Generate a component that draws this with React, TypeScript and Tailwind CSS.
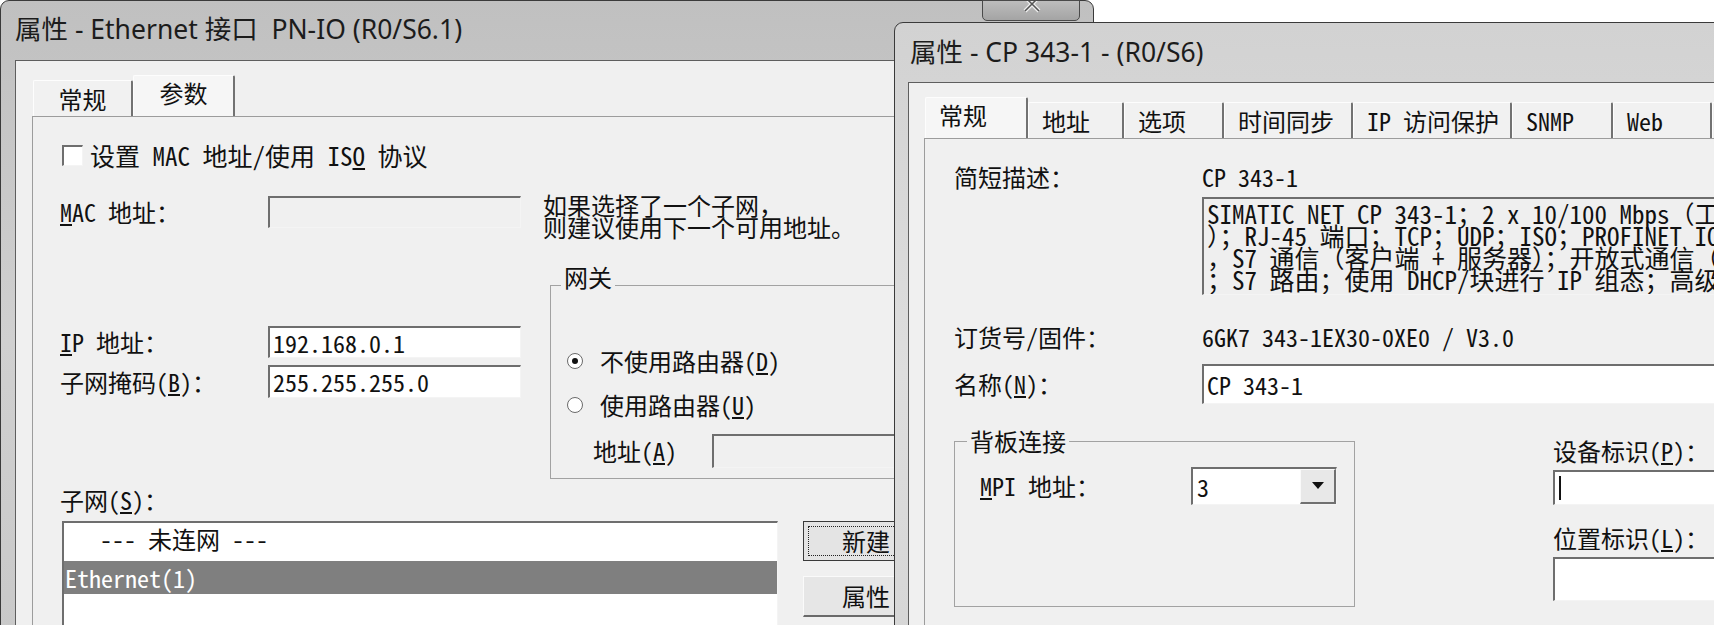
import React from 'react';

const mono = "font-['Noto_Sans_Mono_CJK_SC','Liberation_Mono','Noto_Sans_CJK_SC',monospace]";
const ui = "font-['Noto_Sans','Noto_Sans_CJK_SC',sans-serif]";
const sunken = 'border-t-2 border-l-2 border-b border-r border-t-[#6e6e6e] border-l-[#6e6e6e] border-b-[#f4f4f4] border-r-[#f4f4f4]';

function Tab({ label, width, active, center }: { label: string; width: string; active?: boolean; center?: boolean }) {
  return (
    <div
      className={`${width} ${active ? 'h-[41px] bg-[#f6f6f6] pb-[6px]' : 'h-[36px] bg-[#f1f1f1]'} ${center ? 'justify-center' : 'pl-[13px]'} flex items-center border-t border-l border-t-[#fdfdfd] border-l-[#fdfdfd] border-r-2 border-r-[#727272] rounded-t-[2px] whitespace-nowrap`}
    >
      {label}
    </div>
  );
}

function Radio({ checked, children }: { checked?: boolean; children: React.ReactNode }) {
  return (
    <div className="flex items-center h-[24px]">
      <div className="w-[16px] h-[16px] rounded-full border border-[#6a6a6a] bg-white flex items-center justify-center">
        {checked && <div className="w-[6px] h-[6px] rounded-full bg-[#111]" />}
      </div>
      <span className="ml-[17px]">{children}</span>
    </div>
  );
}

function EthernetDialog() {
  return (
    <div className="absolute left-0 top-0 w-[1094px] h-[680px] rounded-t-[9px] border border-[#3a3a3a] bg-gradient-to-b from-[#c0c0c0] via-[#d0d0d0] to-[#c8c8c8]">
      <div className={`${ui} h-[59px] flex items-center pl-[14px] pb-[2px] text-[26.5px] text-[#1c1c1c] whitespace-nowrap`}>
        属性 - Ethernet 接口&nbsp; PN-IO (R0/S6.1)
      </div>
      <div className="absolute right-[13px] top-[-1px] w-[98px] h-[21px] overflow-hidden rounded-b-[5px] border border-[#4a4a4a] bg-gradient-to-b from-[#bdbdbd] to-[#a4a4a4]">
        <svg className="absolute left-[38px] top-[-8px]" width="22" height="22" viewBox="0 0 22 22">
          <path d="M4 4 L18 18 M18 4 L4 18" stroke="#eeeeee" strokeWidth="4" />
          <path d="M4 4 L18 18 M18 4 L4 18" stroke="#555" strokeWidth="1.5" />
        </svg>
      </div>
      <div className={`${mono} ml-[14px] h-full border-l border-t border-[#5e5e5e] bg-[#f0f0f0] pt-[14px] pl-[16px] text-[24px] text-[#111]`}>
        <div className="flex items-end ml-[1px] leading-none">
          <Tab label="常规" width="w-[100px]" center />
          <Tab label="参数" width="w-[102px]" active center />
        </div>
        <div className="border-t border-l border-[#9c9c9c] h-full pl-[27px] pt-[27px] leading-none">
          <div className="flex items-center h-[22px] ml-[2px]">
            <div className={`w-[21px] h-[21px] bg-white ${sunken}`} />
            <span className="ml-[7px] whitespace-nowrap text-[25px]">
              设置 MAC 地址/使用 IS<u>O</u> 协议
            </span>
          </div>
          <div className="flex mt-[30px]">
            <div className="w-[208px] h-[32px] flex items-center"><span><u>M</u>AC 地址：</span></div>
            <div className={`w-[253px] h-[32px] bg-[#f0f0f0] ${sunken}`} />
            <div className="ml-[22px] -mt-[2px] leading-[22px] whitespace-nowrap">
              <div>如果选择了一个子网，</div>
              <div>则建议使用下一个可用地址。</div>
            </div>
          </div>
          <div className="flex mt-[27px]">
            <div className="w-[490px] shrink-0 pt-[61px]">
              <div className="flex h-[32px]">
                <div className="w-[208px] flex items-center"><span><u>I</u>P 地址：</span></div>
                <div className={`w-[253px] bg-white flex items-center pl-[3px] ${sunken}`}>192.168.0.1</div>
              </div>
              <div className="flex h-[33px] mt-[7px]">
                <div className="w-[208px] flex items-center"><span>子网掩码(<u>B</u>)：</span></div>
                <div className={`w-[253px] bg-white flex items-center pl-[3px] ${sunken}`}>255.255.255.0</div>
              </div>
            </div>
            <fieldset className="w-[420px] shrink-0 border border-[#a2a2a2] pb-[10px]">
              <legend className="ml-[10px] px-[3px] leading-[24px] pb-[16px]">网关</legend>
              <div className="pl-[16px] mt-[44px]">
                <Radio checked>不使用路由器(<u>D</u>)</Radio>
                <div className="mt-[20px]">
                  <Radio>使用路由器(<u>U</u>)</Radio>
                </div>
              </div>
              <div className="flex items-center mt-[17px] pl-[42px] h-[34px]">
                <div className="w-[119px] whitespace-nowrap">地址(<u>A</u>)</div>
                <div className={`w-[300px] h-[34px] bg-[#f0f0f0] ${sunken}`} />
              </div>
            </fieldset>
          </div>
          <div className="mt-[9px] leading-[24px]">子网(<u>S</u>)：</div>
          <div className="flex mt-[9px] ml-[2px]">
            <div className={`w-[716px] shrink-0 h-[140px] bg-white ${sunken}`}>
              <div className="h-[38px] flex items-center pb-[6px] pl-[36px] whitespace-nowrap">--- 未连网 ---</div>
              <div className="h-[33px] flex items-center bg-[#7f7f7f] text-white pl-[1px]">Ethernet(1)</div>
            </div>
            <div className="ml-[25px] shrink-0">
              <div className="w-[110px] h-[40px] border border-[#3a3a3a] bg-[#e4e4e4] p-[4px]">
                <div className="h-full border border-dotted border-[#222] flex items-center pl-[33px]">新建</div>
              </div>
              <div className="w-[110px] h-[41px] mt-[15px] bg-[#e6e6e6] border-t border-l border-[#fafafa] border-b-2 border-r-2 border-b-[#6a6a6a] border-r-[#6a6a6a] flex items-center pl-[38px]">
                属性
              </div>
            </div>
          </div>
        </div>
      </div>
    </div>
  );
}

function CpDialog() {
  return (
    <div className="absolute left-[894px] top-[22px] w-[900px] h-[700px] rounded-tl-[9px] border border-[#3a3a3a] bg-gradient-to-b from-[#d2d2d2] via-[#dedede] to-[#d4d4d4]">
      <div className={`${ui} h-[59px] flex items-center pl-[15px] text-[26.5px] text-[#1c1c1c] whitespace-nowrap`}>
        属性 - CP 343-1 - (R0/S6)
      </div>
      <div className={`${mono} ml-[13px] h-full border-l border-t border-[#5e5e5e] bg-[#f0f0f0] pt-[14px] pl-[15px] text-[24px] text-[#111]`}>
        <div className="flex items-end ml-[1px] leading-none">
          <Tab label="常规" width="w-[103px]" active />
          <Tab label="地址" width="w-[96px]" />
          <Tab label="选项" width="w-[100px]" />
          <Tab label="时间同步" width="w-[129px]" />
          <Tab label="IP 访问保护" width="w-[159px]" />
          <Tab label="SNMP" width="w-[101px]" />
          <Tab label="Web" width="w-[99px]" />
          <Tab label="" width="w-[60px]" />
        </div>
        <div className="border-t border-l border-[#9c9c9c] h-full pl-[29px] pt-[26px] leading-none">
          <div className="flex h-[24px] items-center">
            <div className="w-[248px] shrink-0">简短描述：</div>
            <div>CP 343-1</div>
          </div>
          <div className={`ml-[248px] mt-[8px] h-[98px] bg-[#efefef] pl-[3px] pt-[3px] text-[25px] leading-[22px] whitespace-nowrap overflow-hidden ${sunken}`}>
            <div>SIMATIC NET CP 343-1；2 x 10/100 Mbps（工业以太网</div>
            <div>）；RJ-45 端口；TCP；UDP；ISO；PROFINET IO 控制器</div>
            <div>，S7 通信（客户端 + 服务器）；开放式通信（SEND/RE</div>
            <div>；S7 路由；使用 DHCP/块进行 IP 组态；高级诊断</div>
          </div>
          <div className="flex h-[24px] items-center mt-[30px]">
            <div className="w-[248px] shrink-0">订货号/固件：</div>
            <div>6GK7 343-1EX30-0XE0 / V3.0</div>
          </div>
          <div className="flex h-[40px] mt-[15px]">
            <div className="w-[248px] shrink-0 flex items-center">名称(<u>N</u>)：</div>
            <div className={`w-[600px] shrink-0 bg-white flex items-center pl-[3px] ${sunken}`}>CP 343-1</div>
          </div>
          <div className="flex mt-[26px]">
            <fieldset className="w-[401px] shrink-0 border border-[#a2a2a2] pb-[101px]">
              <legend className="ml-[12px] px-[3px] leading-[22px]">背板连接</legend>
              <div className="flex h-[38px] mt-[15px]">
                <div className="w-[236px] shrink-0 pl-[25px] flex items-center whitespace-nowrap"><span><u>M</u>PI 地址：</span></div>
                <div className={`w-[146px] shrink-0 bg-white flex items-center justify-between ${sunken}`}>
                  <span className="pl-[4px]">3</span>
                  <div className="w-[36px] h-full bg-[#e8e8e8] border-t border-l border-[#fafafa] border-b-2 border-r-2 border-b-[#707070] border-r-[#707070] flex items-center justify-center">
                    <svg width="12" height="8" viewBox="0 0 12 8"><path d="M0 0 H12 L6 7 Z" fill="#111" /></svg>
                  </div>
                </div>
              </div>
            </fieldset>
            <div className="ml-[198px] shrink-0 pt-[9px]">
              <div className="leading-[24px] whitespace-nowrap">设备标识(<u>P</u>)：</div>
              <div className={`w-[300px] h-[35px] mt-[7px] bg-white flex items-center pl-[4px] ${sunken}`}>
                <div className="w-[2px] h-[24px] bg-[#111]" />
              </div>
              <div className="mt-[21px] leading-[24px] whitespace-nowrap">位置标识(<u>L</u>)：</div>
              <div className={`w-[300px] h-[44px] mt-[7px] bg-white ${sunken}`} />
            </div>
          </div>
        </div>
      </div>
    </div>
  );
}

export default function App() {
  return (
    <div className="relative w-[1714px] h-[625px] overflow-hidden bg-white">
      <EthernetDialog />
      <CpDialog />
    </div>
  );
}
